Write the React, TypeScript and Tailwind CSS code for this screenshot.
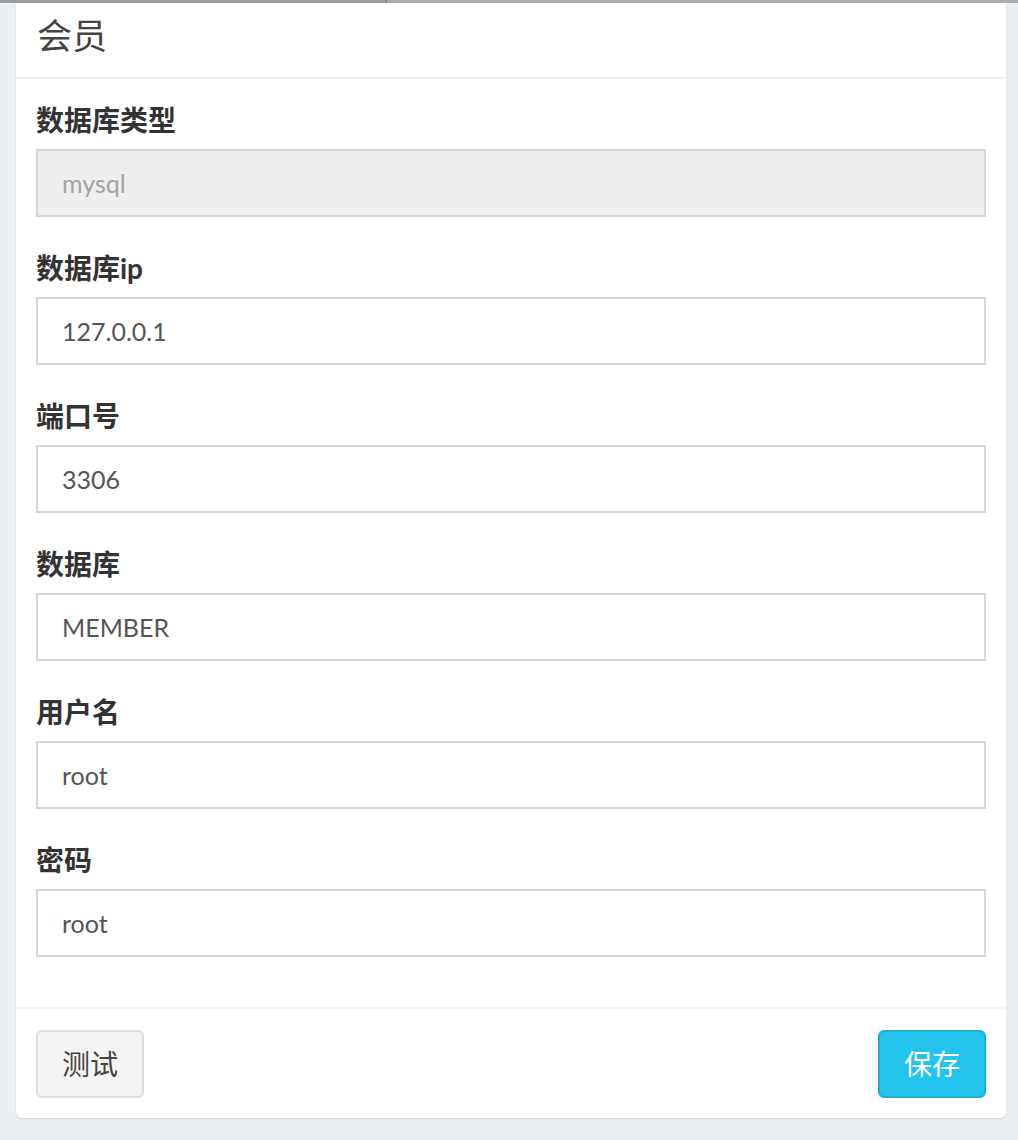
import React, { useState } from 'react';

const fields = [
  { label: '数据库类型', value: 'mysql', disabled: true },
  { label: '数据库ip', value: '127.0.0.1' },
  { label: '端口号', value: '3306' },
  { label: '数据库', value: 'MEMBER' },
  { label: '用户名', value: 'root' },
  { label: '密码', value: 'root' },
];

export default function App() {
  const [values, setValues] = useState(fields.map((f) => f.value));

  return (
    <div className="min-h-[1140px] bg-[#ecf0f5] font-[Lato,'Noto_Sans_CJK_SC',sans-serif]">
      <div className="flex h-[3px]">
        <div className="w-[386px] bg-[#9a9da1]" />
        <div className="w-px bg-[#7f8286]" />
        <div className="flex-1 bg-[#a9adb1]" />
      </div>
      <div className="ml-[16px] mr-[12px] rounded-b-[6px] bg-white shadow-[0_1px_2px_rgba(0,0,0,0.12)]">
        <div className="border-b-2 border-[#f0f0f0] px-[21px] pt-[14px] pb-[24px]">
          <h3 className="text-[35px] leading-[36px] text-[#444]">会员</h3>
        </div>
        <div className="px-[20px] pt-[22px] pb-[18px]">
          {fields.map((f, i) => (
            <div key={f.label} className="mb-[32px]">
              <label className="mb-[9px] block text-[28px] font-bold leading-[39px] text-[#333]">
                {f.label}
              </label>
              <input
                value={values[i]}
                disabled={f.disabled}
                onChange={(e) => {
                  const next = [...values];
                  next[i] = e.target.value;
                  setValues(next);
                }}
                className={
                  'block h-[68px] w-full border-2 border-[#d2d6de] px-[24px] text-[25px] outline-none ' +
                  (f.disabled ? 'bg-[#eeeeee] text-[#a3a3a3]' : 'bg-white text-[#555]')
                }
              />
            </div>
          ))}
        </div>
        <div className="flex items-center justify-between border-t-2 border-[#f4f4f4] px-[20px] pt-[21px] pb-[20px]">
          <button className="h-[68px] rounded-[6px] border-2 border-[#dddddd] bg-[#f4f4f4] px-[24px] text-[28px] text-[#444]">
            测试
          </button>
          <button className="h-[68px] rounded-[6px] border-2 border-[#1fb1d6] bg-[#22c3ec] px-[24px] text-[28px] text-white">
            保存
          </button>
        </div>
      </div>
    </div>
  );
}
